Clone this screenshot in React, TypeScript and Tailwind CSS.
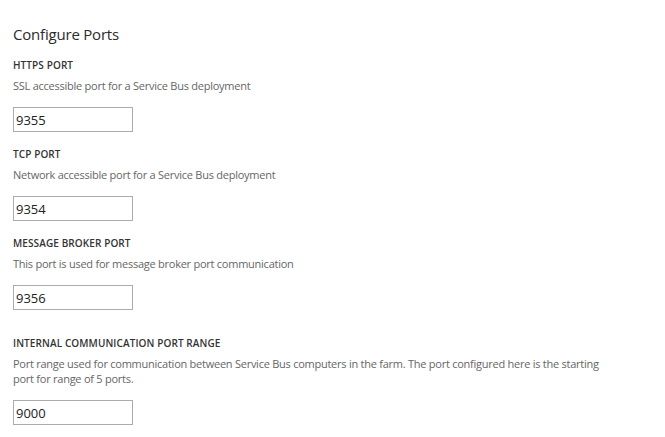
import React from 'react';

const ports = [
  { label: 'HTTPS PORT', description: 'SSL accessible port for a Service Bus deployment', value: '9355' },
  { label: 'TCP PORT', description: 'Network accessible port for a Service Bus deployment', value: '9354' },
  { label: 'MESSAGE BROKER PORT', description: 'This port is used for message broker port communication', value: '9356' },
  {
    label: 'INTERNAL COMMUNICATION PORT RANGE',
    description:
      'Port range used for communication between Service Bus computers in the farm. The port configured here is the starting port for range of 5 ports.',
    value: '9000',
    spaced: true,
  },
];

const App: React.FC = () => {
  return (
    <div className="w-[665px] h-[437px] bg-white pl-[13px] pt-[24px] font-['Open_Sans',sans-serif] text-[#333]">
      <h1 className="text-[15px] leading-[20px] font-medium tracking-[-0.2px] text-[#2b2b2b]">Configure Ports</h1>
      <div className="mt-[14px]">
        {ports.map((port) => (
          <div key={port.label} className={port.spaced ? 'mt-[26px]' : 'mb-[15px]'}>
            <p className="text-[10px] leading-[14px] font-semibold tracking-[0.1px] text-[#333]">{port.label}</p>
            <p className="mt-[6px] text-[11px] leading-[15px] tracking-[-0.25px] text-[#666] w-[590px]">
              {port.description}
            </p>
            <input
              readOnly
              value={port.value}
              className="mt-[14px] block w-[120px] h-[25px] border border-[#ababab] px-[2px] text-[13px] text-[#222] outline-none"
            />
          </div>
        ))}
      </div>
    </div>
  );
};

export default App;
